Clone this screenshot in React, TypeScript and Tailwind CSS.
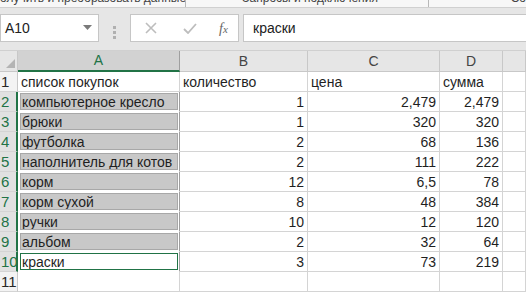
import React from 'react'

const rows: [string, string, string, string][] = [
  ['компьютерное кресло', '1', '2,479', '2,479'],
  ['брюки', '1', '320', '320'],
  ['футболка', '2', '68', '136'],
  ['наполнитель для котов', '2', '111', '222'],
  ['корм', '12', '6,5', '78'],
  ['корм сухой', '8', '48', '384'],
  ['ручки', '10', '12', '120'],
  ['альбом', '2', '32', '64'],
  ['краски', '3', '73', '219'],
]

const cols = 'grid grid-cols-[18px_162px_128px_132px_63px_1fr]'
const cell = 'border-r border-b border-[#d4d4d4] h-5 flex items-end pb-[1px] leading-[16px] overflow-hidden whitespace-nowrap'

function RowHead({ n, sel }: { n: number; sel?: boolean }) {
  return (
    <div
      className={
        'h-5 flex items-end pb-[1px] pl-[1px] leading-[16px] text-[15px] border-b border-[#d4d4d4] ' +
        (sel ? 'bg-[#e1e1e1] text-[#217346] border-r-2 border-r-[#217346]' : 'bg-[#f3f3f3] text-[#262626] border-r border-r-[#c8c8c8]')
      }
    >
      {n}
    </div>
  )
}

export default function App() {
  return (
    <div className="w-[526px] h-[294px] overflow-hidden bg-white text-[14px] text-[#1f1f1f]" style={{ fontFamily: '"Liberation Sans", Arial, sans-serif' }}>
      {/* ribbon remnant */}
      <div className="h-2 overflow-hidden border-b border-[#d0d0d0] bg-[#f7f7f7] flex text-[12px] leading-[16px] text-[#444]">
        <div className="w-[187px] border-r border-[#b8b8b8] -mt-[10px] whitespace-nowrap overflow-hidden">олучить и преобразовать данные</div>
        <div className="w-[243px] -mt-[10px] pl-[56px] border-r border-[#b8b8b8] whitespace-nowrap overflow-hidden">Запросы и подключения</div>
        <div className="-mt-[10px] pl-[82px] whitespace-nowrap">Со</div>
      </div>

      {/* formula bar */}
      <div className="h-[43px] bg-[#e6e6e6] pt-[6px] flex border-b border-[#d0d0d0]">
        <div className="w-[99px] h-[28px] bg-white border border-[#c6c6c6] flex items-center pl-[4px] pr-[6px] justify-between">
          <span className="text-[#222]">A10</span>
          <svg width="9" height="6" viewBox="0 0 9 6"><path d="M0 0h9L4.5 5z" fill="#7a7a7a" /></svg>
        </div>
        <div className="w-[31px] flex flex-col items-center justify-center gap-[2px]">
          <span className="w-[3px] h-[3px] bg-[#b0b0b0]" />
          <span className="w-[3px] h-[3px] bg-[#b0b0b0]" />
          <span className="w-[3px] h-[3px] bg-[#b0b0b0]" />
        </div>
        <div className="w-[109px] h-[28px] bg-white border border-[#c6c6c6] flex items-center">
          <svg className="ml-[14px]" width="12" height="12" viewBox="0 0 12 12"><path d="M1 1l10 10M11 1L1 11" stroke="#bdbdbd" strokeWidth="1.6" /></svg>
          <svg className="ml-[26px]" width="14" height="11" viewBox="0 0 14 11"><path d="M1 6l4 4 8-9" stroke="#bdbdbd" strokeWidth="1.8" fill="none" /></svg>
          <span className="ml-[22px] italic text-[#666] text-[14px]" style={{ fontFamily: '"Liberation Serif", serif' }}>f<span className="text-[11px]">x</span></span>
        </div>
        <div className="ml-[4px] flex-1 h-[28px] bg-white border border-[#c6c6c6] border-r-0 flex items-center pl-[9px] text-[#222]">краски</div>
      </div>

      {/* sheet */}
      <div className={cols}>
        <div className="h-[21px] bg-[#e6e6e6] border-r border-b border-[#c8c8c8] flex items-end justify-end pr-[2px] pb-[3px]">
          <svg width="9" height="9" viewBox="0 0 9 9"><path d="M9 0v9H0z" fill="#b4b4b4" /></svg>
        </div>
        <div className="h-[21px] bg-[#d2d2d2] border-r border-[#9f9f9f] border-b-2 border-b-[#217346] flex items-center justify-center text-[#217346]">A</div>
        {['B', 'C', 'D', ''].map((c) => (
          <div key={c} className="h-[21px] bg-[#e6e6e6] border-r border-b border-[#c8c8c8] flex items-center justify-center text-[#444]">{c}</div>
        ))}

        <RowHead n={1} />
        <div className={cell + ' pl-[3px]'}>список покупок</div>
        <div className={cell + ' pl-[3px]'}>количество</div>
        <div className={cell + ' pl-[3px]'}>цена</div>
        <div className={cell + ' pl-[3px]'}>сумма</div>
        <div className={cell} />

        {rows.map(([a, b, c, d], i) => {
          const active = i === rows.length - 1
          return (
            <React.Fragment key={i}>
              <RowHead n={i + 2} sel />
              <div className="h-5 border-r border-[#9f9f9f] border-b border-b-white p-[1px] pl-[2px]">
                <div
                  className={
                    'h-full flex items-center pl-[1px] leading-[16px] whitespace-nowrap overflow-hidden ' +
                    (active ? 'border border-[#217346] bg-white' : 'border border-[#a8a8a8] bg-[#c8c8c8]')
                  }
                >
                  {a}
                </div>
              </div>
              <div className={cell + ' justify-end pr-[3px]'}>{b}</div>
              <div className={cell + ' justify-end pr-[3px]'}>{c}</div>
              <div className={cell + ' justify-end pr-[3px]'}>{d}</div>
              <div className={cell} />
            </React.Fragment>
          )
        })}

        <RowHead n={11} />
        <div className={cell} />
        <div className={cell} />
        <div className={cell} />
        <div className={cell} />
        <div className={cell} />
      </div>
    </div>
  )
}
